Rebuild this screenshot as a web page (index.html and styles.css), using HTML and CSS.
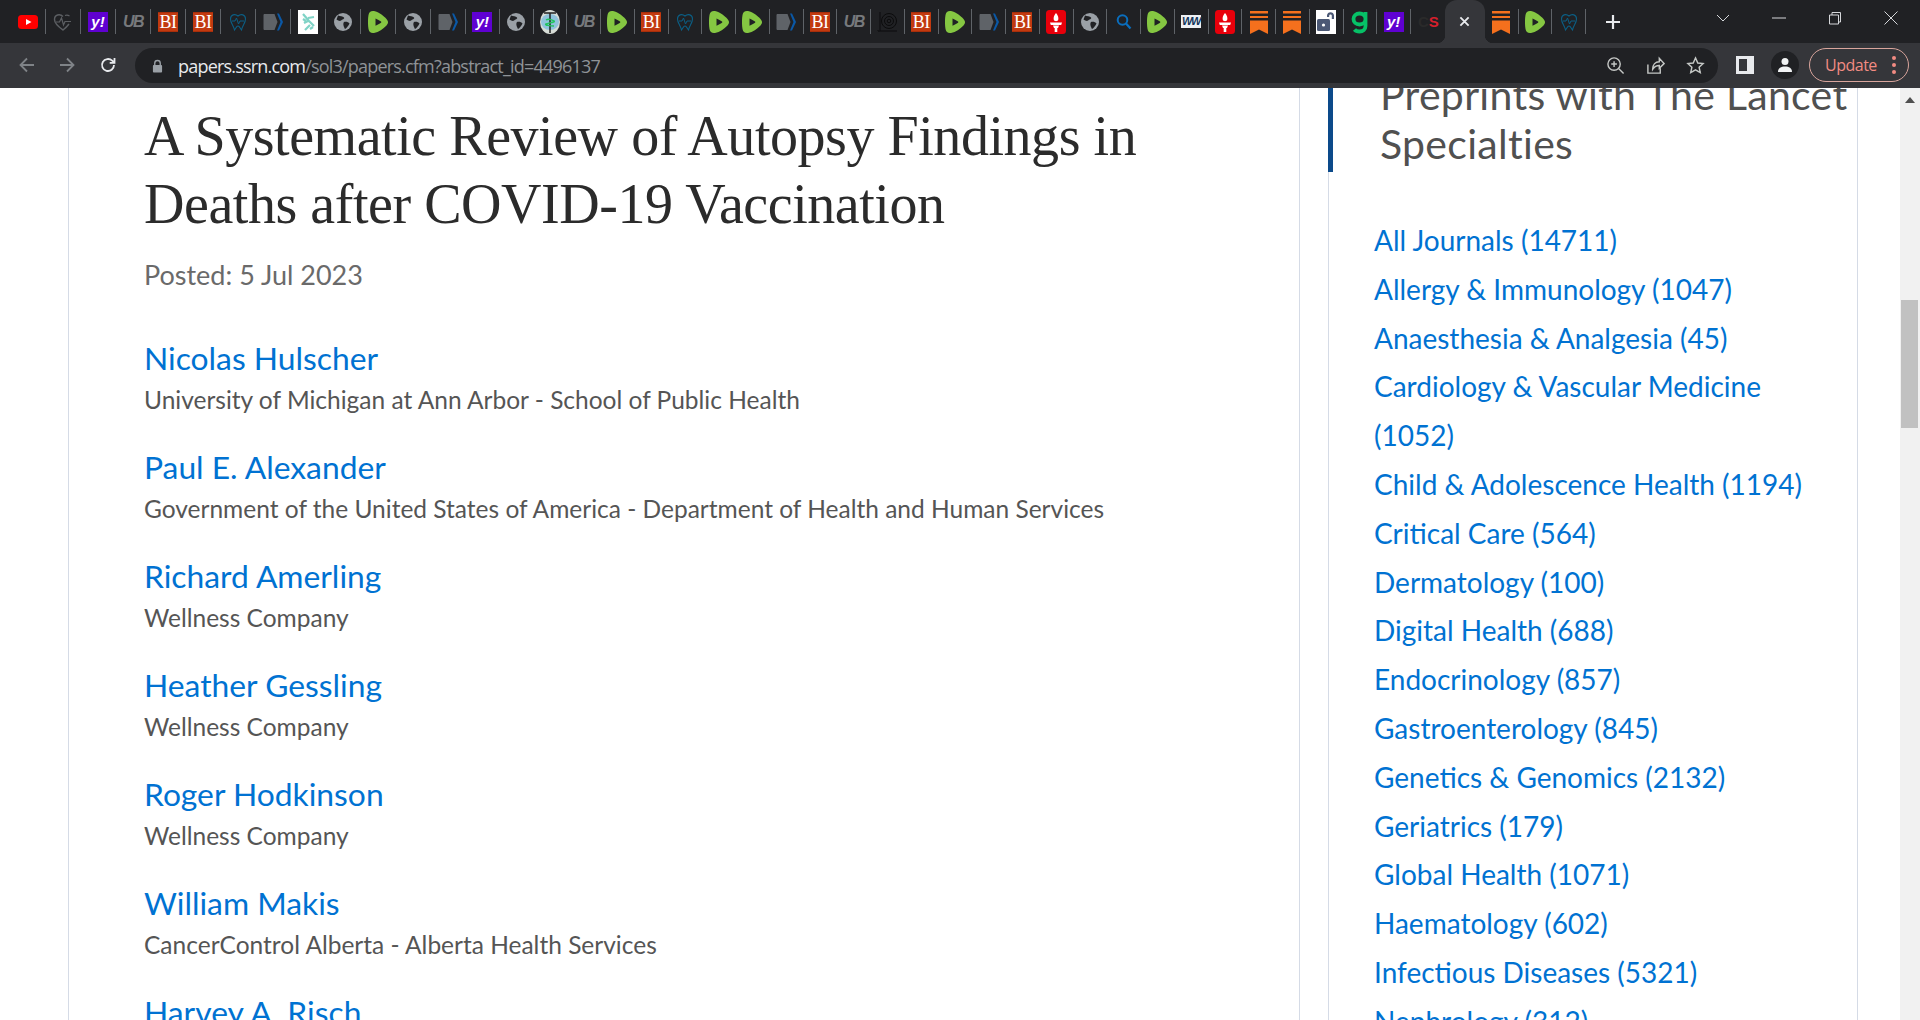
FILE: index.html
```html
<!DOCTYPE html>
<html lang="en">
<head>
<meta charset="UTF-8" />
<title>A Systematic Review of Autopsy Findings in Deaths after COVID-19 Vaccination</title>
<link rel="stylesheet" href="styles.css">
</head>
<body>
<svg class="defs" width="0" height="0" aria-hidden="true">
  <symbol id="i-yt" viewBox="0 0 20 20"><rect y="3" width="20" height="14" rx="3.5" fill="#f00"/><path d="M8 7l5.500 3L8 13z" fill="#fff"/></symbol>
  <symbol id="i-heart" viewBox="0 0 20 20"><path d="M10 4.500C7 1.500 1.500 2.500 1.500 7.500c0 4.500 5 8 8.500 10.500 2.500-2 4.500-4 6-6" fill="none" stroke="#5c5f63" stroke-width="1.400"/><path d="M16.500 4c-1.500-1-3-1-4.500-.5M3 10h3.500l2-4 2 7 1.500-3.500h6" fill="none" stroke="#5c5f63" stroke-width="1.200"/></symbol>
  <symbol id="i-tooth" viewBox="0 0 20 20"><path d="M10 4C7 1.500 2.500 2.500 2.500 7c0 4 3 6 4 11 1.500-2 2-4 3.500-4s2 2 3.500 4c1-5 4-7 4-11 0-4.500-4.500-5.500-7.500-3z" fill="none" stroke="#0b5f85" stroke-width="1.100"/><path d="M4 9h3l1.500-3 2 6 1.500-3h4" fill="none" stroke="#0b5f85" stroke-width="1"/></symbol>
  <symbol id="i-arrow" viewBox="0 0 20 20"><path d="M1.500 2h10l3 8-3 8h-10c-.5 0-1-.5-1-1V3c0-.5.500-1 1-1z" fill="#5f6368"/><path d="M14 1.500h2L20 10l-4 8.500h-2l3.500-8.500z" fill="#0a58a6"/></symbol>
  <symbol id="i-dna" viewBox="0 0 20 24"><rect width="20" height="24" fill="#fff"/><path d="M5 4l6 7 5 5M10 8l6-1M6 13l4-2M7 20l5-5M5 9l3 2M12 19l3-2" fill="none" stroke="#7fd3c6" stroke-width="2.200"/></symbol>
  <symbol id="i-globe" viewBox="0 0 20 20"><circle cx="10" cy="10" r="9" fill="#9aa0a6"/><path d="M5 3.500c2 1 5 .5 6 2s-2 2-3 3-3 0-4.500-1zM11 10c2-.5 4.500 0 5.500 1.500-1 2-3 5-4.500 5.500-1-2-2.500-5-1-7z" fill="#202124"/></symbol>
  <symbol id="i-rumble" viewBox="0 0 20 24"><path d="M6 1c5 1 10 5 12.500 8 2 2.500 2 4 0 6.500C15 19 11 22 6 23c-3 .5-5-1-5.500-4-.7-4-.7-10 0-14C1 2 3 .5 6 1z" fill="#85c742"/><path d="M7.500 8.500c2 .8 4 2 5.500 3 .5.400.5.800 0 1.200-1.500 1-3.500 2.200-5.500 3z" fill="#202124"/></symbol>
  <symbol id="i-med" viewBox="0 0 20 24"><ellipse cx="10" cy="12" rx="10" ry="12" fill="#d7dcd6"/><ellipse cx="10" cy="12" rx="9" ry="8" fill="#8fc3dc"/><path d="M4 3h12M10 3v20" stroke="#222" stroke-width="1.500"/><path d="M6 10c3-2 6 0 8 1s-6 2-8 3 5 2 8 2" fill="none" stroke="#22c55e" stroke-width="1.500"/></symbol>
  <symbol id="i-jo" viewBox="0 0 20 24"><path d="M3 2v18c0 2-2 2-2 0M3 21h17" fill="none" stroke="#0b0b0c" stroke-width="1"/><circle cx="12" cy="11" r="7.500" fill="none" stroke="#0b0b0c"/><circle cx="12" cy="11" r="4.500" fill="none" stroke="#0b0b0c"/><circle cx="12" cy="11" r="1.800" fill="none" stroke="#0b0b0c"/></symbol>
  <symbol id="i-torch" viewBox="0 0 20 24"><rect width="20" height="24" rx="3.500" fill="#e8000b"/><path d="M10 3c2 2.500 2.800 4.500 2.200 7-.4 1.500-4 1.500-4.400 0C7.200 7.500 8 5.500 10 3z" fill="#fff"/><path d="M4 12.500h12l-.8 2.500H4.800zM7 15.500h6L12 18H8zM8.700 18h2.600v4H8.700z" fill="#fff"/></symbol>
  <symbol id="i-search" viewBox="0 0 20 20"><circle cx="8.500" cy="8" r="4.800" fill="none" stroke="#0a6ebd" stroke-width="2"/><path d="M12 11.500l4.500 5" stroke="#0a6ebd" stroke-width="2.200"/></symbol>
  <symbol id="i-mark" viewBox="0 0 20 24"><path d="M1 1h18v2.500H1zM1 6h18v2H1zM1 10.500h18V24l-9-4.500L1 24z" fill="#f5701d"/></symbol>
  <symbol id="i-lock" viewBox="0 0 20 24"><rect width="20" height="24" fill="#fff"/><path d="M11 7V5.500c0-4.500 7-4.500 7 0V9h-2.200V5.700c0-1.600-2.600-1.600-2.600 0V7z" fill="#4b5875"/><rect x="1" y="9" width="13" height="12" rx="1.500" fill="#4b5875"/><circle cx="7.500" cy="15" r="1.600" fill="#fff"/></symbol>
  <symbol id="i-g" viewBox="0 0 20 24"><path d="M9.500 3.500c-3.500 0-6 2.500-6 5.500s2.500 5.500 6 5.500 6-2.500 6-5.500-2.500-5.500-6-5.500zM15.500 2v14c0 3.500-2.500 5.500-6 5.500-2 0-4-.7-5-2" fill="none" stroke="#06c167" stroke-width="3.800"/></symbol>
</svg>

<header class="chrome">
  <div class="tabstrip">
    <div class="tab"><svg class="fav"><use href="#i-yt"/></svg></div>
    <div class="tab"><svg class="fav"><use href="#i-heart"/></svg></div>
    <div class="tab"><span class="fav-yahoo">y!</span></div>
    <div class="tab"><span class="fav-ub">UB</span></div>
    <div class="tab"><span class="fav-bi">BI</span></div>
    <div class="tab"><span class="fav-bi">BI</span></div>
    <div class="tab"><svg class="fav"><use href="#i-tooth"/></svg></div>
    <div class="tab"><svg class="fav"><use href="#i-arrow"/></svg></div>
    <div class="tab"><svg class="fav"><use href="#i-dna"/></svg></div>
    <div class="tab"><svg class="fav"><use href="#i-globe"/></svg></div>
    <div class="tab"><svg class="fav"><use href="#i-rumble"/></svg></div>
    <div class="tab"><svg class="fav"><use href="#i-globe"/></svg></div>
    <div class="tab"><svg class="fav"><use href="#i-arrow"/></svg></div>
    <div class="tab"><span class="fav-yahoo">y!</span></div>
    <div class="tab"><svg class="fav"><use href="#i-globe"/></svg></div>
    <div class="tab"><svg class="fav"><use href="#i-med"/></svg></div>
    <div class="tab"><span class="fav-ub">UB</span></div>
    <div class="tab"><svg class="fav"><use href="#i-rumble"/></svg></div>
    <div class="tab"><span class="fav-bi">BI</span></div>
    <div class="tab"><svg class="fav"><use href="#i-tooth"/></svg></div>
    <div class="tab"><svg class="fav"><use href="#i-rumble"/></svg></div>
    <div class="tab"><svg class="fav"><use href="#i-rumble"/></svg></div>
    <div class="tab"><svg class="fav"><use href="#i-arrow"/></svg></div>
    <div class="tab"><span class="fav-bi">BI</span></div>
    <div class="tab"><span class="fav-ub">UB</span></div>
    <div class="tab"><svg class="fav"><use href="#i-jo"/></svg></div>
    <div class="tab"><span class="fav-bi">BI</span></div>
    <div class="tab"><svg class="fav"><use href="#i-rumble"/></svg></div>
    <div class="tab"><svg class="fav"><use href="#i-arrow"/></svg></div>
    <div class="tab"><span class="fav-bi">BI</span></div>
    <div class="tab"><svg class="fav"><use href="#i-torch"/></svg></div>
    <div class="tab"><svg class="fav"><use href="#i-globe"/></svg></div>
    <div class="tab"><svg class="fav"><use href="#i-search"/></svg></div>
    <div class="tab"><svg class="fav"><use href="#i-rumble"/></svg></div>
    <div class="tab"><span class="fav-ww">WW</span></div>
    <div class="tab"><svg class="fav"><use href="#i-torch"/></svg></div>
    <div class="tab"><svg class="fav"><use href="#i-mark"/></svg></div>
    <div class="tab"><svg class="fav"><use href="#i-mark"/></svg></div>
    <div class="tab"><svg class="fav"><use href="#i-lock"/></svg></div>
    <div class="tab"><svg class="fav"><use href="#i-g"/></svg></div>
    <div class="tab"><span class="fav-yahoo">y!</span></div>
    <div class="tab tab-plain"><span class="fav-cs"><b>C</b>S</span></div>
    <div class="tab-active"><svg class="tab-x" viewBox="0 0 12 12"><path d="M1.500 1.500l9 9M10.500 1.500l-9 9"/></svg></div>
    <div class="tab"><svg class="fav"><use href="#i-mark"/></svg></div>
    <div class="tab"><svg class="fav"><use href="#i-rumble"/></svg></div>
    <div class="tab"><svg class="fav"><use href="#i-tooth"/></svg></div>
    <svg class="newtab" viewBox="0 0 16 16"><path d="M8 1v14M1 8h14"/></svg>
    <div class="winctl">
      <svg class="win win-chev" viewBox="0 0 14 8"><path d="M1 1l6 6 6-6"/></svg>
      <svg class="win win-min" viewBox="0 0 14 2"><path d="M0 1h14"/></svg>
      <svg class="win win-max" viewBox="0 0 14 14"><path d="M1.500 4h9v9h-9zM4 4V1.500h8.500V11H10.500"/></svg>
      <svg class="win win-close" viewBox="0 0 14 14"><path d="M.500.500l13 13M13.500.500l-13 13"/></svg>
    </div>
  </div>
  <div class="toolbar">
    <svg class="navbtn nav-off" viewBox="0 0 18 18"><path d="M16 9H3M9 2.500L2.500 9 9 15.500"/></svg>
    <svg class="navbtn nav-off" viewBox="0 0 18 18"><path d="M2 9h13M9 2.500L15.500 9 9 15.500"/></svg>
    <svg class="navbtn nav-on" viewBox="0 0 18 18"><path d="M15 9a6 6 0 1 1-1.800-4.300L15 6.500M15.500 2v4.800h-4.800"/></svg>
    <div class="omnibox">
      <svg class="lock" viewBox="0 0 12 14"><path d="M3 6V4a3 3 0 0 1 6 0v2" fill="none" stroke="#9aa0a6" stroke-width="1.500"/><rect x="1" y="6" width="10" height="8" rx="1" fill="#9aa0a6"/></svg>
      <span class="url"><span class="url-host">papers.ssrn.com</span>/sol3/papers.cfm?abstract_id=4496137</span>
      <div class="omni-tools">
        <svg class="tool" viewBox="0 0 20 20"><circle cx="8.500" cy="8.500" r="6.500"/><path d="M13.500 13.500l5 5M8.500 5.500v6M5.500 8.500h6"/></svg>
        <svg class="tool" viewBox="0 0 20 20"><path d="M2 9v9h13v-5M7 14c0-5 3-8 7-8V2.500l5 5.500-5 5V10c-3 0-5 1-7 4z"/></svg>
        <svg class="tool" viewBox="0 0 20 20"><path d="M10 2l2.400 5.400 5.600.6-4.200 3.800 1.200 5.700-5-3-5 3 1.200-5.700L2 8l5.600-.6z"/></svg>
      </div>
    </div>
    <svg class="sidepanel" viewBox="0 0 18 18"><path d="M0 0h18v18H0zM3 3v12h8V3z" fill-rule="evenodd"/></svg>
    <div class="avatar"><svg viewBox="0 0 16 16"><circle cx="8" cy="4.500" r="3.500"/><path d="M1 15c0-4 3-5.500 7-5.500s7 1.500 7 5.500z"/></svg></div>
    <div class="update"><span>Update</span><span class="update-dots"><i></i><i></i><i></i></span></div>
  </div>
</header>

<div class="page">
  <main class="paper">
    <h1 class="paper-title">A Systematic Review of Autopsy Findings in Deaths after COVID-19 Vaccination</h1>
    <p class="posted">Posted: 5 Jul 2023</p>
    <div class="authors">
      <div class="author"><a class="author-name">Nicolas Hulscher</a><p class="affil">University of Michigan at Ann Arbor - School of Public Health</p></div>
      <div class="author"><a class="author-name">Paul E. Alexander</a><p class="affil">Government of the United States of America - Department of Health and Human Services</p></div>
      <div class="author"><a class="author-name">Richard Amerling</a><p class="affil">Wellness Company</p></div>
      <div class="author"><a class="author-name">Heather Gessling</a><p class="affil">Wellness Company</p></div>
      <div class="author"><a class="author-name">Roger Hodkinson</a><p class="affil">Wellness Company</p></div>
      <div class="author"><a class="author-name">William Makis</a><p class="affil">CancerControl Alberta - Alberta Health Services</p></div>
      <div class="author"><a class="author-name">Harvey A. Risch</a></div>
    </div>
  </main>
  <aside class="side">
    <h2 class="side-title">Preprints with The Lancet Specialties</h2>
    <ul class="journals">
      <li><a>All Journals (14711)</a></li>
      <li><a>Allergy &amp; Immunology (1047)</a></li>
      <li><a>Anaesthesia &amp; Analgesia (45)</a></li>
      <li><a>Cardiology &amp; Vascular Medicine (1052)</a></li>
      <li><a>Child &amp; Adolescence Health (1194)</a></li>
      <li><a>Critical Care (564)</a></li>
      <li><a>Dermatology (100)</a></li>
      <li><a>Digital Health (688)</a></li>
      <li><a>Endocrinology (857)</a></li>
      <li><a>Gastroenterology (845)</a></li>
      <li><a>Genetics &amp; Genomics (2132)</a></li>
      <li><a>Geriatrics (179)</a></li>
      <li><a>Global Health (1071)</a></li>
      <li><a>Haematology (602)</a></li>
      <li><a>Infectious Diseases (5321)</a></li>
      <li><a>Nephrology (312)</a></li>
    </ul>
  </aside>
  <div class="scrollbar"><span class="scroll-up"></span><div class="scroll-thumb"></div></div>
</div>
</body>
</html>
```

FILE: styles.css
```css
:root{--strip:#202124;--bar:#35363a;--link:#0072d2;--line:#d5dbe6;--txt:#505050;}
*,*:before,*:after{box-sizing:border-box;}
html,body{height:100%;}
body{margin:0;height:1020px;overflow:hidden;display:flex;flex-direction:column;background:#fff;font-family:Lato,'Noto Sans',sans-serif;}
.defs{position:absolute;}

/* browser frame */
.chrome{flex:none;height:88px;background:var(--bar);position:relative;z-index:2;}
.tabstrip{height:43px;background:var(--strip);display:flex;align-items:center;padding-left:11px;}
.tab{flex:none;width:33.75px;height:25px;display:flex;align-items:center;justify-content:center;border-right:1px solid #5f6368;}
.tab:nth-child(-n+13){width:35px;}
.tab-plain{border-right:0;}
.fav{width:20px;height:24px;display:block;}
.fav-bi{flex:none;width:20px;height:20px;background:#c23a10;border-top:1px solid #a82f0b;border-bottom:1px solid #a82f0b;font:400 18px/18px 'Liberation Serif',serif;letter-spacing:-.5px;color:#fff;text-align:center;}
.fav-yahoo{flex:none;width:20px;height:20px;background:#5f01d1;font:italic 700 15px/20px 'Liberation Sans',sans-serif;color:#fff;text-align:center;}
.fav-ub{flex:none;width:20px;font:italic 700 16px/20px 'Liberation Sans',sans-serif;letter-spacing:-1.500px;color:#77797c;text-align:center;white-space:nowrap;}
.fav-ww{flex:none;width:20px;height:13px;background:#eef1f4;font:italic 700 11px/13px 'Liberation Sans',sans-serif;letter-spacing:-1.200px;color:#14365c;text-align:center;white-space:nowrap;}
.fav-cs{flex:none;width:20px;font:700 15px/20px 'Liberation Sans',sans-serif;color:#d61f2c;text-align:center;}
.fav-cs b{color:#2a2a2a;}
.tab-active{flex:none;width:40px;height:43px;background:var(--bar);border-radius:12px 12px 0 0;display:flex;align-items:center;justify-content:center;position:relative;}
.tab-active:before,.tab-active:after{content:"";position:absolute;bottom:0;width:8px;height:8px;background:radial-gradient(circle at 0 0,transparent 8px,var(--bar) 8.5px);}
.tab-active:before{left:-8px;}
.tab-active:after{right:-8px;transform:scaleX(-1);}
.tab-x{width:11px;height:11px;fill:none;stroke:#e8eaed;stroke-width:2;}
.newtab{flex:none;width:16px;height:16px;margin-left:19px;fill:none;stroke:#e8eaed;stroke-width:2.2;}
.winctl{margin-left:auto;display:flex;align-items:center;height:100%;padding-right:22px;gap:42px;}
.win{fill:none;stroke:#d5d7da;stroke-width:1;display:block;}
.win-chev{width:14px;height:8px;margin-top:-7px;}
.win-min{width:14px;height:2px;margin-top:-7px;}
.win-max{width:14px;height:14px;margin-top:-7px;}
.win-close{width:14px;height:14px;margin-top:-7px;}

.toolbar{height:45px;display:flex;align-items:flex-start;padding-top:5px;}
.navbtn{flex:none;width:18px;height:18px;margin-top:8px;fill:none;stroke-width:1.800;}
.navbtn:nth-child(1){margin-left:18px;}
.navbtn:nth-child(2){margin-left:22px;}
.navbtn:nth-child(3){margin-left:23px;}
.nav-off{stroke:#7f8387;}
.nav-on{stroke:#e8eaed;}
.omnibox{flex:none;width:583px;flex-grow:1;max-width:1583px;margin-left:18px;height:35px;border-radius:18px;background:var(--strip);display:flex;align-items:center;padding-left:17px;}
.lock{width:11px;height:14px;flex:none;}
.url{margin-left:15px;font:18px/1 'Open Sans',sans-serif;letter-spacing:-.8px;color:#8f9397;white-space:nowrap;}
.url-host{color:#e8eaed;}
.omni-tools{margin-left:auto;display:flex;gap:21px;padding-right:13px;}
.tool{width:19px;height:19px;fill:none;stroke:#c4c7c5;stroke-width:1.500;display:block;}
.sidepanel{flex:none;width:18px;height:18px;margin:8px 0 0 18px;fill:#e8eaed;}
.avatar{flex:none;width:28px;height:28px;margin:3px 0 0 17px;border-radius:50%;background:var(--strip);display:flex;align-items:center;justify-content:center;}
.avatar svg{width:16px;height:16px;fill:#f1f3f4;}
.update{flex:none;width:100px;height:34px;margin:0 11px 0 10px;border:1px solid #d9a59c;border-radius:17px;display:flex;align-items:center;justify-content:space-between;padding:0 12px 0 15px;font:16px/1 'Open Sans',sans-serif;letter-spacing:-.5px;color:#f28b82;}
.update-dots{display:flex;flex-direction:column;gap:3px;}
.update-dots i{display:block;width:4px;height:4px;border-radius:50%;background:#f28b82;}

/* page */
.page{flex:1;min-height:0;display:flex;overflow:hidden;position:relative;}
.paper{flex:none;width:1232px;margin-left:68px;padding:14px 40px 0 75px;border-left:1px solid var(--line);border-right:1px solid var(--line);}
.paper-title{margin:0;font:400 56px/68px 'Liberation Serif',serif;letter-spacing:-.45px;color:#2b2b2b;}
.posted{margin:19px 0 0;font-size:27px;line-height:36px;color:#6a6a6a;}
.authors{margin-top:44px;display:flex;flex-direction:column;gap:24px;}
.author-name{display:block;font-size:31.800px;line-height:42px;color:var(--link);}
.affil{margin:0;font-size:24.500px;line-height:41px;height:43px;color:#555;}
.side{flex:none;width:530px;margin-left:28px;border-left:1px solid var(--line);border-right:1px solid var(--line);}
.side-title{margin:-18px 0 0 -1px;padding:0 0 4px 47px;border-left:5px solid #0c4a8a;font-weight:400;font-size:41px;line-height:49px;letter-spacing:.3px;color:var(--txt);}
.journals{list-style:none;margin:44px 0 0;padding:0 40px 0 45px;}
.journals li{font-size:28px;line-height:48.800px;}
.journals a{color:var(--link);}
.scrollbar{flex:none;width:20px;margin-left:auto;background:#f1f1f1;position:relative;}
.scroll-up{position:absolute;left:5px;top:9px;border:5px solid transparent;border-top:0;border-bottom:6px solid #505050;}
.scroll-thumb{position:absolute;left:1px;right:2px;top:212px;height:128px;background:#c1c1c1;}
```
